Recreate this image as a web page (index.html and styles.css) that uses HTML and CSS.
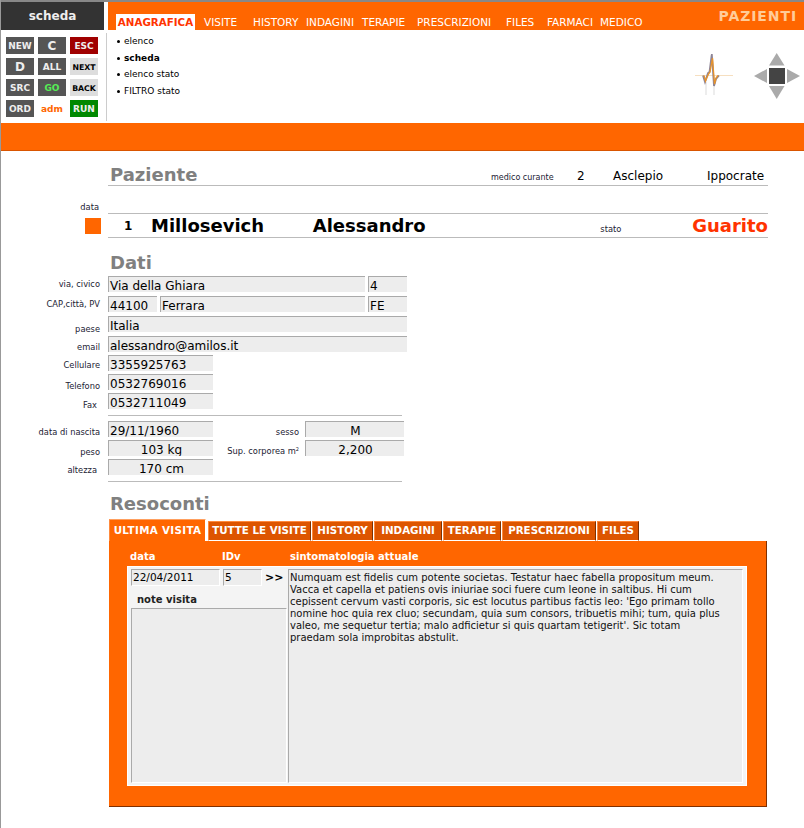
FILE: index.html
```html
<!DOCTYPE html>
<html lang="it">
<head>
<meta charset="utf-8">
<title>scheda</title>
<link rel="stylesheet" href="styles.css">
</head>
<body>
<div class="page">
  <header class="top">
    <div class="topbar">
      <div class="title">scheda</div>
      <nav class="tabs">
        <span class="tab tab-active">ANAGRAFICA</span>
        <span class="tab">VISITE</span>
        <span class="tab">HISTORY</span>
        <span class="tab">INDAGINI</span>
        <span class="tab">TERAPIE</span>
        <span class="tab">PRESCRIZIONI</span>
        <span class="tab">FILES</span>
        <span class="tab">FARMACI</span>
        <span class="tab">MEDICO</span>
        <span class="module">PAZIENTI</span>
      </nav>
    </div>
    <div class="sub">
      <div class="btns">
        <span class="btn">NEW</span>
        <span class="btn btn-big">C</span>
        <span class="btn btn-esc">ESC</span>
        <span class="btn btn-big">D</span>
        <span class="btn">ALL</span>
        <span class="btn btn-light">NEXT</span>
        <span class="btn">SRC</span>
        <span class="btn btn-go">GO</span>
        <span class="btn btn-light">BACK</span>
        <span class="btn">ORD</span>
        <span class="btn btn-adm">adm</span>
        <span class="btn btn-run">RUN</span>
      </div>
      <ul class="menu">
        <li>elenco</li>
        <li class="menu-on">scheda</li>
        <li>elenco stato</li>
        <li>FILTRO stato</li>
      </ul>
      <svg class="ecg" width="40" height="46" viewBox="694 51 40 46" aria-hidden="true">
        <path d="M706 95V82M714 95V84" stroke="#e8e8e8" stroke-width="1.5" fill="none"/>
        <path d="M695 75.500H733" stroke="#f6dfc0" stroke-width="1" fill="none"/>
        <path d="M703 75.500L705 82L708 73L709.500 72L711.800 54L714 86L716 79L719 75.500" stroke="#8d8496" stroke-width="1.800" fill="none"/>
        <path d="M704 75.500L705.500 81L708.500 74L710 72L712.500 58L714.500 84L716 78L718 75.500" stroke="#e8932a" stroke-width="1.300" fill="none"/>
      </svg>
      <svg class="pad" width="46" height="46" viewBox="754 53 46 46" aria-hidden="true">
        <rect x="769" y="68" width="16" height="16" fill="#444"/>
        <path d="M776.700 53L784.500 65.500H769Z" fill="#aaa"/>
        <path d="M776.700 99L784.500 86H769Z" fill="#aaa"/>
        <path d="M754 76L767 69V83Z" fill="#aaa"/>
        <path d="M800 76L787 69V83Z" fill="#aaa"/>
      </svg>
    </div>
  </header>
  <div class="band"></div>
  <main class="main">
    <div class="head-row">
      <h2 class="h">Paziente</h2>
      <span class="lbl lbl-medico">medico curante</span>
      <span class="med med-id">2</span>
      <span class="med med-nome">Asclepio</span>
      <span class="med med-cogn">Ippocrate</span>
    </div>
    <div class="data-row"><span class="lbl">data</span></div>
    <div class="name-row">
      <span class="square"></span>
      <div class="name-line">
        <span class="pid">1</span>
        <span class="big big-cogn">Millosevich</span>
        <span class="big big-nome">Alessandro</span>
        <span class="lbl lbl-stato">stato</span>
        <span class="big big-stato">Guarito</span>
      </div>
    </div>
    <h2 class="h h-dati">Dati</h2>

    <div class="rows rows-a">
      <div class="row"><span class="lbl t2">via, civico</span><div class="f f-via">Via della Ghiara</div><div class="f f-civ">4</div></div>
      <div class="row"><span class="lbl t2">CAP,città, PV</span><div class="f f-cap">44100</div><div class="f f-city">Ferrara</div><div class="f f-civ">FE</div></div>
      <div class="row"><span class="lbl t7">paese</span><div class="f f-full">Italia</div></div>
      <div class="row"><span class="lbl t5">email</span><div class="f f-full">alessandro@amilos.it</div></div>
    </div>
    <div class="rows rows-b">
      <div class="row"><span class="lbl t4">Cellulare</span><div class="f f-md">3355925763</div></div>
      <div class="row"><span class="lbl t6">Telefono</span><div class="f f-md">0532769016</div></div>
      <div class="row"><span class="lbl t6 lbl-in">Fax</span><div class="f f-md">0532711049</div></div>
    </div>
    <hr class="sep">
    <div class="rows rows-c">
      <div class="row"><span class="lbl t5">data di nascita</span><div class="f f-md">29/11/1960</div><span class="lbl lbl-mid t5">sesso</span><div class="f f-sm">M</div></div>
      <div class="row"><span class="lbl t6">peso</span><div class="f f-md f-center">103 kg</div><span class="lbl lbl-mid t5">Sup. corporea m<sup class="sq">2</sup></span><div class="f f-sm">2,200</div></div>
      <div class="row"><span class="lbl t5 lbl-in">altezza</span><div class="f f-md f-center">170 cm</div></div>
    </div>
    <hr class="sep sep-b">
    <h2 class="h h-res">Resoconti</h2>

    <div class="rtabs">
      <span class="rtab rtab-on">ULTIMA VISITA</span>
      <span class="rtab">TUTTE LE VISITE</span>
      <span class="rtab">HISTORY</span>
      <span class="rtab">INDAGINI</span>
      <span class="rtab">TERAPIE</span>
      <span class="rtab">PRESCRIZIONI</span>
      <span class="rtab">FILES</span>
    </div>
    <section class="panel">
      <div class="cols">
        <span class="col-data">data</span>
        <span class="col-id">IDv</span>
        <span>sintomatologia attuale</span>
      </div>
      <div class="box">
        <div class="left">
          <div class="left-top">
            <div class="fi fi-date">22/04/2011</div>
            <div class="fi fi-id">5</div>
            <span class="go">&gt;&gt;</span>
          </div>
          <div class="note-lbl">note visita</div>
          <div class="note"></div>
        </div>
        <div class="text">Numquam est fidelis cum potente societas. Testatur haec fabella propositum meum.<br>Vacca et capella et patiens ovis iniuriae soci fuere cum leone in saltibus. Hi cum<br>cepissent cervum vasti corporis, sic est locutus partibus factis leo: 'Ego primam tollo<br>nomine hoc quia rex cluo; secundam, quia sum consors, tribuetis mihi; tum, quia plus<br>valeo, me sequetur tertia; malo adficietur si quis quartam tetigerit'. Sic totam<br>praedam sola improbitas abstulit.</div>
      </div>
    </section>
  </main>
</div>
</body>
</html>
```
FILE: styles.css
```css
* { box-sizing: border-box; }
html, body { margin: 0; padding: 0; background: #fff; }
body { font-family: "DejaVu Sans", Verdana, sans-serif; color: #000; }
.page { width: 804px; height: 828px; overflow: hidden; border-left: 1px solid #999; }

.top { height: 123px; border-top: 2px solid #888; }
.topbar { display: flex; height: 28px; }
.title { width: 103px; margin-right: 4px; background: #333; color: #eee; font-size: 12px; font-weight: bold; line-height: 28px; text-align: center; }
.tabs { flex: 1; background: #f60; display: grid; grid-template-columns: 8px 88px 49px 53px 56px 55px 89px 41px 53px 1fr; align-items: end; color: #fff; font-size: 10.500px; line-height: 16px; position: relative; }
.tab { grid-row: 1; white-space: nowrap; }
.tab:nth-child(2) { grid-column: 3; }
.tab:nth-child(3) { grid-column: 4; }
.tab:nth-child(4) { grid-column: 5; }
.tab:nth-child(5) { grid-column: 6; }
.tab:nth-child(6) { grid-column: 7; }
.tab:nth-child(7) { grid-column: 8; }
.tab:nth-child(8) { grid-column: 9; }
.tab:nth-child(9) { grid-column: 10; }
.tab-active { grid-column: 2; width: 79px; background: #fff; color: #f30; font-weight: bold; font-size: 10.300px; text-align: center; }
.module { position: absolute; right: 7px; top: 5px; font-size: 14px; font-weight: bold; line-height: 18px; color: #fc9; letter-spacing: .9px; }

.sub { display: flex; height: 93px; }
.btns { display: grid; grid-template-columns: repeat(3, 28px); grid-auto-rows: 17px; gap: 4px; margin: 7px 0 0 5px; width: 96px; height: 80px; }
.btn { background: #555; color: #eee; font-size: 9px; font-weight: bold; line-height: 19px; text-align: center; }
.btn-big { font-size: 12px; line-height: 18px; }
.btn-esc { background: #a00000; }
.btn-light { background: #ddd; color: #000; font-size: 7.800px; line-height: 19px; }
.btn-go { color: #5e5; }
.btn-adm { background: none; color: #f60; }
.btn-run { background: #008800; }
.menu { list-style: none; margin: 3px 0 0 4px; padding: 0 0 0 10px; width: 580px; height: 88px; border-left: 1px solid #ccc; font-size: 9px; line-height: 16.500px; }
.menu li { position: relative; padding-left: 7px; }
.menu li::before { content: ""; position: absolute; left: 0; top: 7px; width: 3px; height: 3px; border-radius: 50%; background: #000; }
.menu-on { font-weight: bold; }
.ecg { margin: 21px 0 0 8px; }
.pad { margin: 23px 0 0 20px; }

.band { height: 28px; background: #f60; border-bottom: 1px solid #d95500; }

.main { padding-left: 107px; }
.h { margin: 0; font-size: 18px; font-weight: bold; line-height: 22px; color: #808080; padding-left: 2px; }
.lbl { font-size: 8.300px; line-height: 12px; color: #223; white-space: nowrap; }

.head-row { display: flex; align-items: flex-end; width: 660px; height: 35px; border-bottom: 1px solid #bbb; }
.head-row .h { width: 383px; line-height: 20px; }
.lbl-medico { width: 86px; padding-bottom: 1px; font-size: 8px; }
.med { font-size: 12px; line-height: 18px; white-space: nowrap; }
.med-id { width: 36px; }
.med-nome { width: 94px; }
.med-cogn { flex: 1; }

.data-row { height: 27px; margin-left: -107px; width: 98px; text-align: right; padding-top: 9px; }
.name-row { display: flex; align-items: center; margin-left: -23px; }
.square { width: 16px; height: 16px; background: #f60; margin-right: 7px; }
.name-line { display: flex; align-items: center; width: 660px; height: 25px; border-top: 1px solid #bbb; border-bottom: 1px solid #bbb; }
.pid { width: 43px; padding-left: 16px; font-size: 12px; font-weight: bold; }
.big { font-size: 18px; font-weight: bold; line-height: 22px; white-space: nowrap; }
.big-cogn { width: 162px; }
.big-nome { width: 288px; }
.lbl-stato { width: 92px; padding-top: 7px; }
.big-stato { color: #f30; flex: 1; text-align: right; }

.h-dati { margin-top: 14px; height: 24px; }

.rows { display: flex; flex-direction: column; margin-left: -107px; }
.rows-a { gap: 4px; }
.rows-b, .rows-c { gap: 3px; }
.rows-b { margin-top: 3px; }
.row { display: flex; height: 16px; }
.row > .lbl:first-child { width: 99px; margin-right: 8px; text-align: right; }
.row > .lbl-in:first-child { padding-right: 3px; }
.t2 { padding-top: 2px; }
.t4 { padding-top: 4px; }
.t5 { padding-top: 5px; }
.t6 { padding-top: 6px; }
.t7 { padding-top: 7px; }
.lbl-mid { width: 86px; text-align: right; margin-right: 6px; }
.sq { font-size: 5px; vertical-align: 3px; line-height: 0; }
.f { height: 16px; overflow: hidden; background: #ededed; border-top: 1px solid #aaa; border-left: 1px solid #aaa; font-size: 12px; line-height: 19px; padding-left: 1px; white-space: nowrap; }
.f-via { width: 257px; margin-right: 3px; }
.f-civ { width: 39px; }
.f-cap { width: 49px; margin-right: 3px; }
.f-city { width: 205px; margin-right: 3px; }
.f-full { width: 299px; }
.f-md { width: 105px; }
.f-center { text-align: center; }
.f-sm { width: 99px; text-align: center; }
.sep { margin: 6px 0 5px 0; width: 294px; height: 1px; border: 0; background: #bbb; }
.sep-b { margin-bottom: 0; }
.h-res { margin-top: 11px; height: 26px; }

.rtabs { display: flex; align-items: flex-end; height: 22px; margin-left: 1px; }
.rtab { height: 20px; margin-right: 1px; background: #dd5500; border-top: 1px solid #ff8a3c; border-left: 1px solid #ff8a3c; border-right: 1px solid #803000; border-bottom: 1px solid #fff; color: #fff; font-size: 10.300px; font-weight: bold; line-height: 17px; text-align: center; white-space: nowrap; }
.rtab:nth-child(2) { width: 103px; }
.rtab:nth-child(3) { width: 61px; }
.rtab:nth-child(4) { width: 68px; }
.rtab:nth-child(5) { width: 58px; }
.rtab:nth-child(6) { width: 94px; }
.rtab:nth-child(7) { width: 42px; }
.rtab-on { width: 97px; height: 22px; margin-right: 2px; background: #f60; border-bottom: 0; border-right: 1px solid #fff; border-top-color: #ffa060; line-height: 20px; letter-spacing: .35px; }

.panel { margin-left: 1px; width: 658px; height: 266px; background: #f60; border-right: 1px solid #803000; border-bottom: 1px solid #803000; padding: 0 0 0 18px; }
.cols { display: flex; height: 25px; padding: 9px 0 0 3px; color: #fff; font-size: 10px; font-weight: bold; line-height: 14px; }
.col-data { width: 92px; }
.col-id { width: 68px; }
.box { display: flex; width: 620px; height: 220px; background: #f4f4f4; border: 1px solid #fff; padding: 2px 3px 2px 3px; }
.left { display: flex; flex-direction: column; width: 157px; }
.left-top { display: flex; height: 16px; }
.fi { height: 17px; background: #ededed; border-top: 1px solid #aaa; border-left: 1px solid #aaa; border-right: 1px solid #fff; border-bottom: 1px solid #fff; font-size: 10.500px; line-height: 14px; padding-left: 1px; }
.fi-date { width: 89px; margin-right: 3px; }
.fi-id { width: 39px; margin-right: 3px; }
.go { font-size: 11px; font-weight: bold; line-height: 18px; }
.note-lbl { margin-top: 8px; padding-left: 6px; height: 14px; font-size: 10px; font-weight: bold; line-height: 14px; color: #222; }
.note { flex: 1; margin-top: 1px; margin-right: 1px; background: #ededed; border-top: 1px solid #aaa; border-left: 1px solid #aaa; border-right: 1px solid #fff; border-bottom: 1px solid #fff; }
.text { flex: 1; background: #ededed; border-top: 1px solid #aaa; border-left: 1px solid #aaa; border-right: 1px solid #fff; border-bottom: 1px solid #fff; font-size: 10px; line-height: 12px; padding: 2px 0 0 1px; color: #111; white-space: nowrap; }
```
